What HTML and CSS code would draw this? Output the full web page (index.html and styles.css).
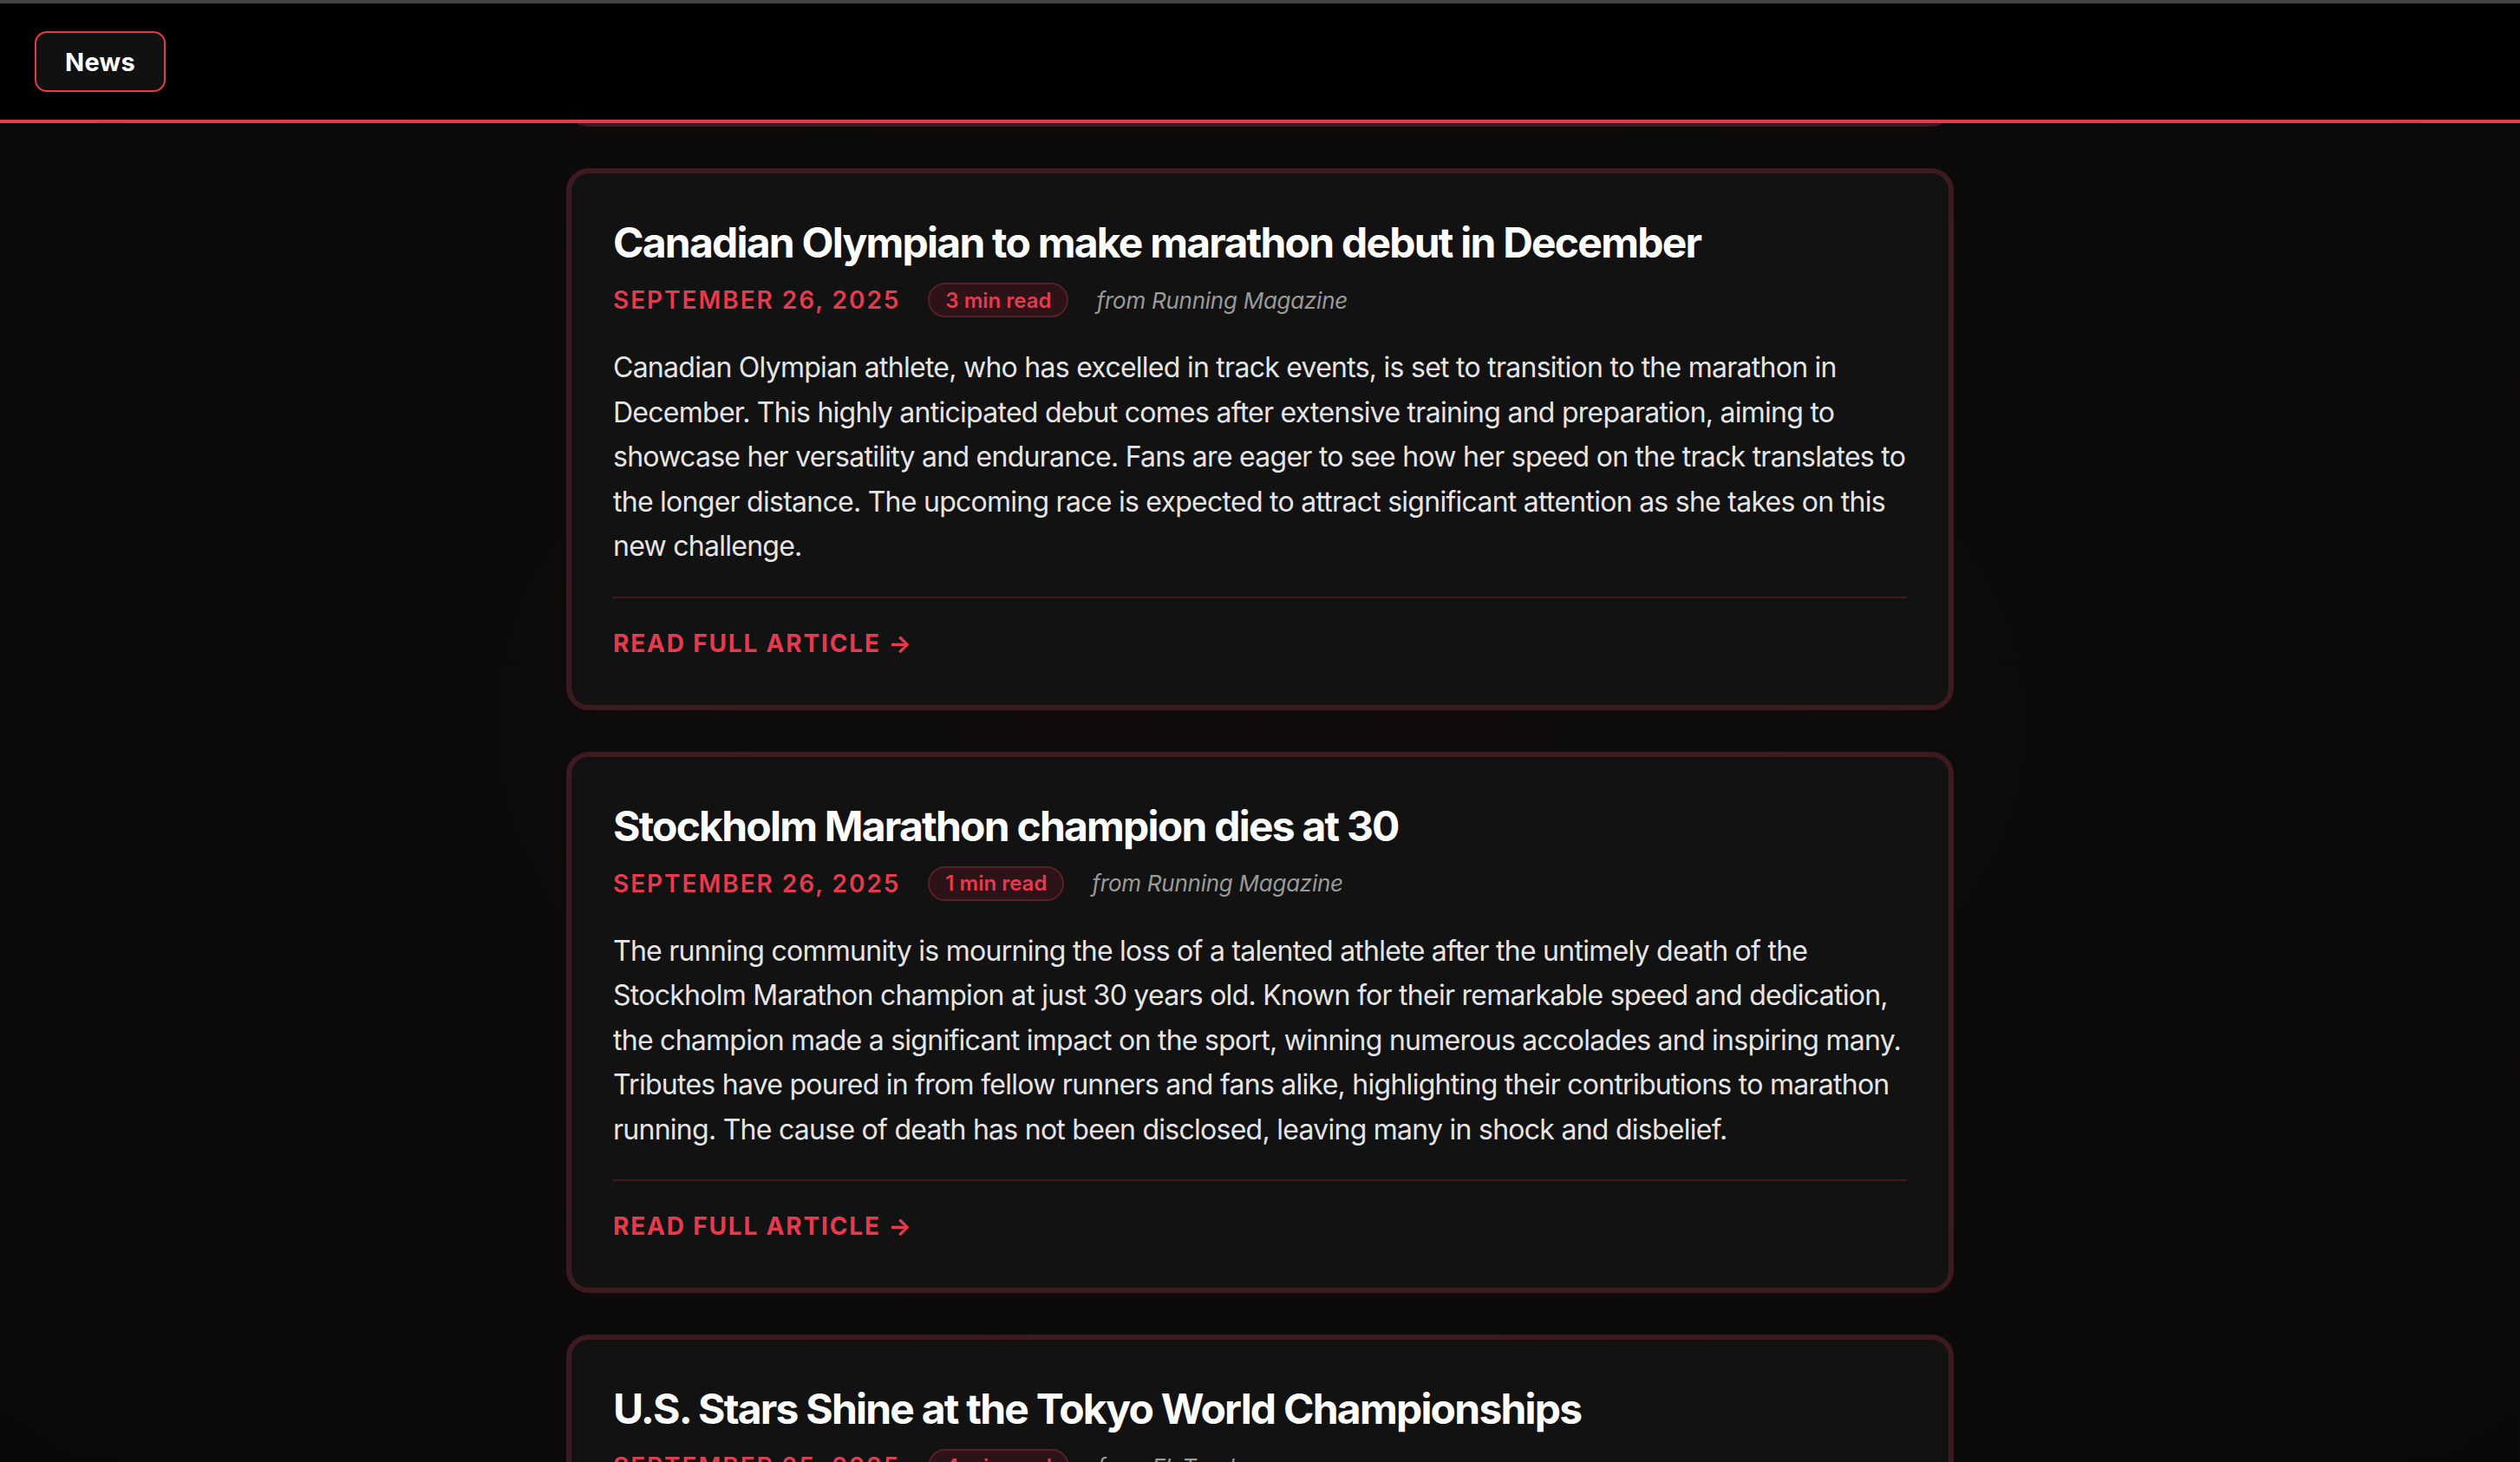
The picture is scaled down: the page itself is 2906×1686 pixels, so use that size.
FILE: index.html
```html
<!DOCTYPE html>
<html lang="en">
<head>
<meta charset="utf-8">
<title>News</title>
<link rel="stylesheet" href="styles.css">
</head>
<body>
<header class="topbar">
  <button class="tab" type="button">News</button>
</header>
<main class="feed-wrap">
  <div class="feed">
    <div class="card ghost"></div>

    <article class="card">
      <h2 class="title">Canadian Olympian to make marathon debut in December</h2>
      <div class="meta">
        <span class="date">September 26, 2025</span>
        <span class="pill">3 min read</span>
        <span class="source">from Running Magazine</span>
      </div>
      <p class="summary">Canadian Olympian athlete, who has excelled in track events, is set to transition to the marathon in December. This highly anticipated debut comes after extensive training and preparation, aiming to showcase her versatility and endurance. Fans are eager to see how her speed on the track translates to the longer distance. The upcoming race is expected to attract significant attention as she takes on this new challenge.</p>
      <div class="card-foot"><a class="more" href="#">Read full article →</a></div>
    </article>

    <article class="card">
      <h2 class="title">Stockholm Marathon champion dies at 30</h2>
      <div class="meta">
        <span class="date">September 26, 2025</span>
        <span class="pill">1 min read</span>
        <span class="source">from Running Magazine</span>
      </div>
      <p class="summary">The running community is mourning the loss of a talented athlete after the untimely death of the Stockholm Marathon champion at just 30 years old. Known for their remarkable speed and dedication, the champion made a significant impact on the sport, winning numerous accolades and inspiring many. Tributes have poured in from fellow runners and fans alike, highlighting their contributions to marathon running. The cause of death has not been disclosed, leaving many in shock and disbelief.</p>
      <div class="card-foot"><a class="more" href="#">Read full article →</a></div>
    </article>

    <article class="card">
      <h2 class="title">U.S. Stars Shine at the Tokyo World Championships</h2>
      <div class="meta">
        <span class="date">September 25, 2025</span>
        <span class="pill">4 min read</span>
        <span class="source">from FloTrack</span>
      </div>
      <p class="summary">American athletes delivered a string of standout performances at the World Championships in Tokyo, collecting medals across sprints, hurdles and distance events and setting several championship records along the way.</p>
      <div class="card-foot"><a class="more" href="#">Read full article →</a></div>
    </article>
  </div>
</main>
</body>
</html>
```

FILE: styles.css
```css
* {
  box-sizing: border-box;
}

html,
body {
  margin: 0;
  height: 100%;
  overflow: hidden;
}

body {
  display: flex;
  flex-direction: column;
  background: #0b0909;
  border-top: 4px solid #434343;
  font-family: Inter, "Noto Sans", "Liberation Sans", sans-serif;
  color: #e5e5e5;
}

.topbar {
  flex: none;
  height: 138px;
  display: flex;
  align-items: center;
  padding-left: 40px;
  background: #000;
  border-bottom: 4px solid #e63a4b;
}

.tab {
  height: 70px;
  padding: 0 33px;
  background: #111;
  border: 2px solid #e63a4b;
  border-radius: 14px;
  color: #fff;
  font-family: inherit;
  font-size: 29px;
  font-weight: 700;
  letter-spacing: 0.01em;
}

.feed-wrap {
  flex: 1;
  overflow: hidden;
  background: radial-gradient(ellipse 70% 80% at 50% 45%, #100c0c 0%, #0c0a0a 55%, #0a0909 100%);
}

.feed {
  width: 1600px;
  margin: 0 auto;
  display: flex;
  flex-direction: column;
  gap: 48px;
}

.card {
  background: #121212;
  border: 6px solid #3d1a1f;
  border-radius: 26px;
  padding: 48px 48px 51px;
}

.card.ghost {
  height: 100px;
  margin-top: -96px;
  padding: 0;
}

.title {
  margin: 0 0 14px;
  font-size: 48px;
  line-height: 64px;
  font-weight: 700;
  letter-spacing: -0.037em;
  color: #fff;
}

.meta {
  display: flex;
  align-items: center;
  gap: 32px;
  height: 40px;
  margin-bottom: 32px;
}

.date {
  font-size: 28px;
  font-weight: 600;
  letter-spacing: 0.07em;
  text-transform: uppercase;
  color: #e63a4e;
}

.pill {
  display: flex;
  align-items: center;
  height: 40px;
  padding: 0 18px;
  background: #2b1317;
  border: 2px solid #5a1e26;
  border-radius: 999px;
  font-size: 24px;
  font-weight: 600;
  color: #e63a4e;
}

.source {
  font-size: 26px;
  font-style: italic;
  letter-spacing: -0.01em;
  color: #9a9a9a;
}

.summary {
  margin: 0;
  font-size: 32px;
  line-height: 51.5px;
  letter-spacing: -0.023em;
  color: #e5e5e5;
}

.card-foot {
  margin-top: 32px;
  padding-top: 32px;
  border-top: 2px solid #45191f;
}

.more {
  display: inline-block;
  font-size: 28px;
  line-height: 40px;
  font-weight: 700;
  letter-spacing: 0.065em;
  text-transform: uppercase;
  text-decoration: none;
  color: #e63a4e;
}
```
